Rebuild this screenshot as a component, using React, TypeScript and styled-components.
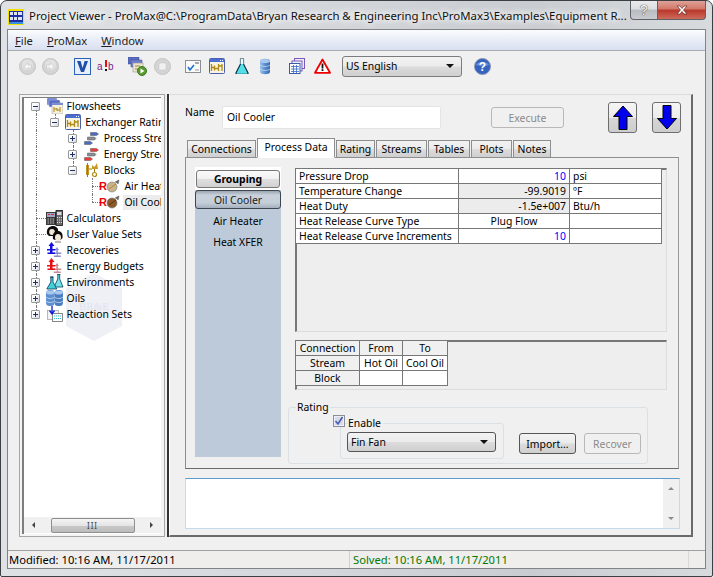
import React from "react";
import styled, { createGlobalStyle } from "styled-components";

const Global = createGlobalStyle`
  html, body { margin: 0; padding: 0; background: #fff; }
  body { font-family: "Noto Sans", "Open Sans", sans-serif; font-size: 10.4px; color: #000; }
  * { box-sizing: border-box; }
`;

const UI = `"Noto Sans", "Open Sans", sans-serif`;
const FS = "10.4px";

const Win = styled.div`
  width: 713px; height: 577px; display: flex; flex-direction: column; position: relative; overflow: hidden;
  border: 1px solid #3c3f43; border-radius: 7px 7px 2px 2px;
  background: linear-gradient(90deg, #dfe2e5 0%, #d5d8dc 40%, #c9cdd1 75%, #d8dbde 100%);
  padding: 0 6px 7px 6px;
`;
const TitleBar = styled.div`
  height: 28px; flex: none; display: flex; align-items: flex-start; position: relative;
`;
const TitleIcon = styled.svg`width: 16px; height: 16px; margin: 8px 5px 0 1px; flex: none;`;
const TitleText = styled.div`
  font-size: 11.38px; line-height: 16px; margin-top: 7px; white-space: nowrap; color: #101010;
  text-shadow: 0 0 6px #fff, 0 0 8px #fff, 0 0 10px #fff; font-family: ${UI};
`;
const Caption = styled.div`position: absolute; right: 0; top: -1px; display: flex; height: 20px;`;
const CapBtn = styled.div<{ $close?: boolean }>`
  width: ${p => (p.$close ? "48px" : "28px")}; height: 20px; display: flex; align-items: center; justify-content: center;
  border: 1px solid #5e6166; border-top: none;
  border-radius: ${p => (p.$close ? "0 0 4px 0" : "0 0 0 4px")};
  ${p => p.$close && "border-left: none;"}
  background: ${p => p.$close
    ? "linear-gradient(180deg,#e0a79c 0%,#d27a6c 45%,#b9392c 55%,#cf6a5c 100%)"
    : "linear-gradient(180deg,#e9ebed 0%,#dcdee1 45%,#b9bdc2 55%,#c8cbcf 100%)"};
  color: #fff; font-size: 14px; font-family: "Liberation Sans", sans-serif;
  text-shadow: 0 0 1px #333, 0 0 1px #333;
`;

const Client = styled.div`
  flex: 1; min-height: 0; display: flex; flex-direction: column; background: #f0f0f0;
  border: 1px solid #7f8489;
`;
const MenuBar = styled.div`
  height: 21px; flex: none; display: flex; align-items: center; padding-left: 7px; gap: 14px;
  background: linear-gradient(180deg, #fbfcfe 0%, #eef1f9 35%, #d9e0f0 100%);
  border-bottom: 1px solid #a8abb0; font-size: 11.2px; color: #1e1e1e;
`;
const MenuItem = styled.span`
  & u { text-underline-offset: 1px; }
`;
const Toolbar = styled.div`
  height: 42px; flex: none; display: flex; align-items: center; padding: 0 0 12px 9px;
`;
const ToolIcon = styled.span<{ $gap?: number; $lead?: number }>`
  width: 20px; height: 20px; display: flex; align-items: center; justify-content: center; flex: none;
  margin-right: ${p => p.$gap ?? 4}px;
  margin-left: ${p => p.$lead ?? 0}px;
  & svg { display: block; }
`;
const LangSelect = styled.div`
  width: 120px; height: 21px; border: 1px solid #7c7c7c; border-radius: 3px; display: flex; align-items: center;
  justify-content: space-between; padding: 0 7px 0 3px; font-size: ${FS}; flex: none;
  background: linear-gradient(180deg,#f3f3f3 0%,#ebebeb 48%,#dcdcdc 52%,#cfcfcf 100%);
`;
const Caret = styled.span`
  width: 0; height: 0; border-left: 4px solid transparent; border-right: 4px solid transparent; border-top: 4px solid #111;
`;

const Main = styled.div`
  flex: 1; min-height: 0; display: flex; padding: 1px 12px 13px 12px;
`;
const TreeFrame = styled.div`
  width: 146px; margin-left: -1px; flex: none; display: flex; padding: 2px 3px 2px 2px;
  border: 1px solid #a6a6a6; background: #f4f4f4;
`;
const TreeInner = styled.div`
  flex: 1; min-width: 0; display: flex; flex-direction: column; background: #fff;
  border-left: 2px solid #7e7e7e; border-top: 1px solid #7e7e7e;
  position: relative; overflow: hidden;
`;
const Tree = styled.div`flex: 1; min-height: 0; padding: 0 0 0 3px; position: relative; overflow: hidden;`;
const Row = styled.div`
  height: 16px; display: flex; align-items: center; white-space: nowrap; position: relative; font-size: ${FS}; width: 200px;
`;
const Guide = styled.span<{ $v?: "full" | "top" | "bottom"; $h?: boolean }>`
  width: 18.6px; height: 16px; flex: none; position: relative; display: flex; align-items: center; justify-content: center;
  &::before {
    content: ""; position: absolute; left: 9px; width: 0; border-left: 1px dotted #777;
    display: ${p => (p.$v ? "block" : "none")};
    top: ${p => (p.$v === "bottom" ? "8px" : "0")};
    bottom: ${p => (p.$v === "top" ? "8px" : "0")};
  }
  &::after {
    content: ""; position: absolute; left: 9px; top: 8px; width: 10px; border-top: 1px dotted #777;
    display: ${p => (p.$h ? "block" : "none")};
  }
`;
const Expander = styled.span`
  width: 9px; height: 9px; border: 1px solid #9a9a9a; border-radius: 1px; position: relative; z-index: 1; margin-left: -1px;
  background: linear-gradient(135deg, #fff 30%, #d4d8e0 100%);
  display: flex; align-items: center; justify-content: center;
  color: #1d2f63;
`;
const ExpH = styled.i`position: absolute; left: 1px; right: 1px; top: 3px; height: 1px; background: #1d2f63;`;
const ExpV = styled.i`position: absolute; top: 1px; bottom: 1px; left: 3px; width: 1px; background: #1d2f63;`;
const NodeIcon = styled.span<{ $leaf?: boolean }>`
  width: ${p => (p.$leaf ? "24px" : "18px")}; margin-left: ${p => (p.$leaf ? "-2px" : "0")};
  height: 16px; flex: none; display: flex; align-items: center; justify-content: ${p => (p.$leaf ? "flex-start" : "center")}; position: relative; z-index: 1;
`;
const NodeText = styled.span<{ $sel?: boolean; $leaf?: boolean }>`
  margin-left: ${p => (p.$leaf ? "0" : "2px")}; padding: 0 1px; line-height: 15px; position: relative; z-index: 1;
  background: ${p => (p.$sel ? "#ececec" : "transparent")};
`;
const Watermark = styled.svg`position: absolute; left: 41px; top: 174px; width: 58px; height: 70px;`;
const HScroll = styled.div`
  height: 16px; flex: none; display: flex; align-items: center; background: #f0f0f0; margin-bottom: 1px; padding: 0 8px;
  justify-content: space-between;
`;
const ArrowL = styled.span`width:0;height:0;border-top:3px solid transparent;border-bottom:3px solid transparent;border-right:3px solid #444;`;
const ArrowR = styled.span`width:0;height:0;border-top:3px solid transparent;border-bottom:3px solid transparent;border-left:3px solid #444;`;
const Thumb = styled.span`
  width: 84px; height: 15px; border: 1px solid #8e8f8f; border-radius: 2px; display: flex; align-items: center; justify-content: center;
  background: linear-gradient(180deg,#f4f4f4 0%,#e4e4e4 50%,#c9c9c9 52%,#bcbcbc 100%); font-size: 8px; color: #444; letter-spacing: 1px;
`;
const Splitter = styled.div`
  width: 4px; flex: none; border-right: 2px solid #333;
`;
const Right = styled.div`
  flex: 1; min-width: 0; display: flex; flex-direction: column; padding: 7px 10px 8px 15px;
  border-top: 1px solid #dcdcdc; border-right: 2px solid #6a6a6a; border-bottom: 2px solid #6a6a6a; border-left: 1px solid #fff;
`;
const HeadRow = styled.div`display: flex; align-items: flex-start; height: 34px; flex: none;`;
const NameLabel = styled.span`width: 37px; margin-top: 3px; font-size: ${FS}; line-height: 15px; flex: none;`;
const NameInput = styled.div`
  width: 219px; height: 23px; margin-top: 4px; background: #fff; border: 1px solid #e4e4e4; border-radius: 2px; padding: 0 4px; line-height: 20px; font-size: ${FS}; flex: none;
`;
const GhostBtn = styled.div`
  border: 1px solid #b8b8b8; border-radius: 3px; color: #8a8a8a; display: flex; align-items: center; justify-content: center; font-size: ${FS};
  background: #f0f0f0;
`;
const ExecBtn = styled(GhostBtn)`width: 73px; height: 21px; margin: 5px 0 0 50px;`;
const ArrowBtn = styled.div<{ $gap: number }>`
  width: 29px; height: 31px; border: 1px solid #6e6e6e; border-radius: 3px; margin-left: ${p => p.$gap}px; flex: none;
  background: linear-gradient(180deg,#f5f5f5 0%,#ececec 50%,#d6d6d6 52%,#cdcdcd 100%);
  display: flex; align-items: center; justify-content: center;
`;
const Tabs = styled.div`display: flex; align-items: flex-end; height: 21px; flex: none; padding-left: 2px; position: relative; z-index: 2; gap: 1px;`;
const Tab = styled.div<{ $active?: boolean; $w: number }>`
  width: ${p => p.$w}px; height: ${p => (p.$active ? "20px" : "17px")}; border: 1px solid #8c8e90;
  display: flex; align-items: center; justify-content: center; font-size: ${FS}; padding-bottom: ${p => (p.$active ? "3px" : "0")};
  ${p => p.$active
    ? "background:#fff; border-bottom-color:#fff; margin-bottom:-1px;"
    : "background:linear-gradient(180deg,#f2f2f2 0%,#ebebeb 50%,#dddddd 52%,#cfcfcf 100%); border-bottom:none;"}
`;
const Pane = styled.div`
  width: 494px; height: 312px; flex: none; border: 1px solid #8c8e90; border-right-color: #9a9a9a; border-bottom-color: #6a6a6a; padding: 9px 0 0 9px; display: flex; background: #f0f0f0;
  position: relative;
`;
const Side = styled.div`
  width: 86px; height: 290px; flex: none; background: #bccad9; display: flex; flex-direction: column; align-items: center;
`;
const GroupHead = styled.div`
  width: 100%; height: 23px; background: #fff; padding: 3px 1px 2px 1px; flex: none;
`;
const GroupBtn = styled.div`
  height: 18px; border: 1px solid #777; border-radius: 3px; font-weight: 700; font-size: ${FS};
  display: flex; align-items: center; justify-content: center;
  background: linear-gradient(180deg,#fafafa 0%,#f0f0f0 50%,#dedede 52%,#d2d2d2 100%);
`;
const GroupItem = styled.div<{ $sel?: boolean }>`
  width: 100%; height: ${p => (p.$sel ? "19px" : "21px")}; display: flex; align-items: center; justify-content: center; font-size: ${FS}; flex: none;
  ${p => p.$sel && `
    margin-bottom: 1px; border: 1px solid #3f4750; border-radius: 3px; color: #202020;
    background: linear-gradient(180deg,#9aa6b2 0%,#c9d2dc 25%,#c4ced9 70%,#a4b0bd 100%);
  `}
`;
const Col = styled.div`width: 372px; margin-left: 7px; flex: none;`;
const GridBox = styled.div<{ $h: number; $mt: number }>`
  margin-left: 7px; width: 372px; height: ${p => p.$h}px; margin-top: ${p => p.$mt}px;
  border-top: 2px solid #777; border-left: 2px solid #777; border-right: 1px solid #dcdcdc; border-bottom: 1px solid #dcdcdc;
  background: #eeeeee;
`;
const Table = styled.table`border-collapse: collapse; table-layout: fixed; margin: -2px 0 0 -2px; font-size: ${FS};`;
const Td = styled.td<{ $w?: number; $bg?: string; $c?: string; $a?: string }>`
  border: 1px solid #777; height: 15px; padding: 0 3px; line-height: 13px; white-space: nowrap; overflow: hidden;
  ${p => p.$w && `width: ${p.$w}px;`}
  background: ${p => p.$bg ?? "#fff"};
  color: ${p => p.$c ?? "#000"};
  text-align: ${p => p.$a ?? "left"};
`;
const Rating = styled.fieldset`
  margin: 11px 0 0 0; width: 360px; height: 63px; border: 1px solid #dbe0e4; border-radius: 3px; padding: 0;
`;
const Legend = styled.legend`padding: 0 1px; margin-left: 7px; font-size: ${FS}; line-height: 13px;`;
const RatingBody = styled.div`display: flex; align-items: flex-start; padding-left: 51px;`;
const EnableWrap = styled.div`position: relative; flex: none; margin-top: 3px;`;
const Enable = styled.fieldset`
  margin: 0; width: 164px; height: 42px; border: 1px solid #dbe0e4; border-radius: 3px; padding: 2px 6px 0 6px;
`;
const EnableLegend = styled.legend`padding: 0 2px 0 0; margin-left: 1px; font-size: ${FS}; line-height: 13px;`;
const Check = styled.span`
  position: absolute; left: -7px; top: -2px; width: 12px; height: 12px; background: #d5dce6; border: 1px solid #8a8f96; box-shadow: inset 0 0 0 1px #eef; display:flex; align-items:center; justify-content:center; z-index: 1;
`;
const TypeSelect = styled(LangSelect)`width: 149px; height: 20px; border-color: #555;`;
const ImportBtn = styled.div`
  width: 57px; height: 21px; margin: 19px 0 0 15px; border: 1px solid #555; border-radius: 3px; display:flex; align-items:center; justify-content:center; font-size: ${FS}; flex: none;
  background: linear-gradient(180deg,#f3f3f3 0%,#ebebeb 48%,#dcdcdc 52%,#cfcfcf 100%);
`;
const RecoverBtn = styled(GhostBtn)`width: 57px; height: 21px; margin: 19px 0 0 8px; flex: none;`;
const Notes = styled.div`
  width: 495px; height: 51px; margin-top: 9px; flex: none; background: #fff;
  border: 1px solid #c5dbec; border-top-color: #5a9ccc; display: flex; justify-content: flex-end;
`;
const NotesBar = styled.div`
  width: 16px; background: #f0f0f0; display: flex; flex-direction: column; justify-content: space-between; align-items: center; padding: 8px 0;
`;
const ArrowU = styled.span`width:0;height:0;border-left:3px solid transparent;border-right:3px solid transparent;border-bottom:3px solid #8a8a8a;`;
const ArrowD = styled.span`width:0;height:0;border-left:3px solid transparent;border-right:3px solid transparent;border-top:3px solid #8a8a8a;`;
const Status = styled.div`
  height: 18px; flex: none; display: flex; background: #f0eded; border-top: 1px solid #a0a0a0; font-size: 11.2px; line-height: 17px;
`;
const StatusCell = styled.div<{ $w?: number; $green?: boolean }>`
  ${p => (p.$w ? `width:${p.$w}px;flex:none;` : "flex:1;")}
  padding-left: ${p => (p.$green ? "3px" : "1px")};
  color: ${p => (p.$green ? "#007a00" : "#000")};
  border-right: 1px solid ${p => (p.$green ? "#d8d8d8" : "#cfcfcf")};
  white-space: nowrap;
`;
const Grip = styled.div`width: 16px; flex: none;`;

/* ---------- drawings ---------- */
const Gray = ({ dir }: { dir: "l" | "r" }) => (
  <svg width="17" height="17" viewBox="0 0 17 17">
    <circle cx="8.5" cy="8.5" r="8" fill="#d4d4d4" stroke="#c4c4c4" />
    <circle cx="8.5" cy="7" r="5.5" fill="#e2e2e2" />
    <path d={dir === "l" ? "M9 4.5 5 8.5l4 4v-2.5h3.5V7H9z" : "M8 4.5l4 4-4 4V10H4.5V7H8z"} fill="#f4f4f4" stroke="#bcbcbc" strokeWidth=".5" />
  </svg>
);
const Stop = () => (
  <svg width="17" height="17" viewBox="0 0 17 17">
    <circle cx="8.5" cy="8.5" r="8" fill="#d4d4d4" stroke="#c4c4c4" />
    <rect x="5" y="5" width="7" height="7" rx="1" fill="#f0f0f0" stroke="#c4c4c4" strokeWidth=".5" />
  </svg>
);
const VIcon = () => (
  <svg width="17" height="17" viewBox="0 0 17 17">
    <rect x=".5" y=".5" width="16" height="16" fill="#e8eefb" stroke="#2b62b8" />
    <path d="M3 3h3.6l2 7 2-7H14l-4 11H7z" fill="#1f4fa8" />
  </svg>
);
const AbIcon = () => (
  <svg width="18" height="15" viewBox="0 0 18 15">
    <text x="0" y="11" fontFamily="Liberation Sans" fontSize="10" fill="#7a1a8a">a</text>
    <rect x="8" y="1" width="2" height="7" fill="#e01010" /><rect x="8" y="10" width="2" height="2" fill="#111" />
    <text x="11" y="11" fontFamily="Liberation Sans" fontSize="10" fill="#7a1a8a">b</text>
  </svg>
);
const FlowPlay = () => (
  <svg width="20" height="19" viewBox="0 0 20 19">
    <rect x="0" y="0" width="11" height="7" fill="#5a6cc0" stroke="#3c4a90" strokeWidth=".5" />
    <rect x="3" y="3" width="11" height="7" fill="#7080cc" stroke="#3c4a90" strokeWidth=".5" />
    <rect x="5" y="6" width="10" height="9" fill="#e9e5d0" stroke="#888" strokeWidth=".5" />
    <path d="M7 9h5M7 12h5" stroke="#a08a30" />
    <circle cx="14" cy="14" r="4.5" fill="#5a9a30" stroke="#3d7a1e" />
    <path d="M12.5 11.5l4 2.5-4 2.5z" fill="#fff" />
  </svg>
);
const CheckWin = () => (
  <svg width="16" height="13" viewBox="0 0 16 13">
    <rect x=".5" y=".5" width="15" height="12" fill="#fafafa" stroke="#8a8f96" />
    <path d="M10 3h4" stroke="#555" />
    <path d="M3 7l2 3 4-5" stroke="#1a70d0" strokeWidth="1.6" fill="none" />
    <path d="M10 10h4" stroke="#999" />
  </svg>
);
const DiagramWin = ({ s = 16 }: { s?: number }) => (
  <svg width={s} height={s} viewBox="0 0 16 16">
    <rect x=".5" y=".5" width="15" height="15" rx="1" fill="#f8f4e4" stroke="#4a5fb0" />
    <rect x="1" y="1" width="14" height="3" fill="#4a6fd0" />
    <path d="M11 2.5h1M13 2.5h1" stroke="#fff" />
    <path d="M2.500 6v7M2.500 9.500h3M5.500 7.500v5M5.500 10.500h4M9.500 6v7M9.500 8h4M13 6v7" fill="none" stroke="#b08a10" strokeWidth="1.300" />
  </svg>
);
const Flask = ({ s = 14 }: { s?: number }) => (
  <svg width={s} height={s * 1.2} viewBox="0 0 14 17">
    <path d="M5 1h4M5.5 1v5L1 15c-.3.7.2 1.5 1 1.5h10c.8 0 1.3-.8 1-1.5L8.5 6V1" fill="#52e0e6" stroke="#0a2a44" strokeWidth="1.2" />
    <path d="M5.5 1h3v5h-3z" fill="#e8fbfc" />
  </svg>
);
const Cyl = ({ w = 12, h = 17 }: { w?: number; h?: number }) => (
  <svg width={w} height={h} viewBox="0 0 12 17">
    <defs><linearGradient id="cy" x1="0" x2="1" y1="0" y2="0"><stop offset="0" stopColor="#9cc0ee" /><stop offset=".5" stopColor="#5b8fd0" /><stop offset="1" stopColor="#3968ac" /></linearGradient></defs>
    <path d="M1 3c0-3 10-3 10 0v11c0 3-10 3-10 0z" fill="url(#cy)" />
    <path d="M1 7c2 2 8 2 10 0M1 11c2 2 8 2 10 0" stroke="#cfe0f6" fill="none" strokeWidth=".7" />
    <ellipse cx="6" cy="3" rx="5" ry="2" fill="#a9c8ef" />
  </svg>
);
const Stack = () => (
  <svg width="16" height="16" viewBox="0 0 16 16">
    <rect x="5.5" y=".5" width="10" height="10" fill="#f0ecfa" stroke="#7a5ab8" />
    <rect x="3" y="3" width="10" height="10" fill="#eef0fa" stroke="#7a5ab8" />
    <rect x=".5" y="5.5" width="10.5" height="10" fill="#fff" stroke="#3a5ab0" />
    <path d="M2 8.5h8M2 11h8M2 13.5h8M4.5 7v8M7.5 7v8" stroke="#3a6ac0" strokeWidth=".8" />
  </svg>
);
const Warn = () => (
  <svg width="17" height="16" viewBox="0 0 17 16">
    <path d="M8.5 1.5 16 14.8H1z" fill="#fff" stroke="#ee0000" strokeWidth="1.8" strokeLinejoin="round" />
    <rect x="7.6" y="5.5" width="1.8" height="5" fill="#111" /><rect x="7.6" y="11.2" width="1.8" height="1.8" fill="#111" />
  </svg>
);
const Help = () => (
  <svg width="17" height="17" viewBox="0 0 17 17">
    <circle cx="8.5" cy="8.5" r="8" fill="#3463c2" stroke="#8a95ad" />
    <path d="M2 7c1-4 12-4 13 0-4 1.5-9 1.5-13 0z" fill="#7f9fe2" opacity=".7" />
    <text x="8.5" y="12.8" textAnchor="middle" fontFamily="Liberation Sans" fontWeight="700" fontSize="12" fill="#fff">?</text>
  </svg>
);
const BigArrow = ({ down }: { down?: boolean }) => (
  <svg width="20" height="25" viewBox="0 0 20 25">
    <path d={down ? "M6 0.5h8v13h5.5L10 24 .5 13.5H6z" : "M6 24.5h8v-13h5.5L10 1 .5 11.5H6z"} fill="#0000ee" stroke="#000" />
  </svg>
);
const CloseX = () => (
  <svg width="16" height="10" viewBox="0 0 16 10">
    <path d="M3 1h3l2 2.500L10 1h3L9.500 5 13 9h-3L8 6.500 6 9H3l3.500-4z" fill="#fff" stroke="#6a2a22" strokeWidth=".7" />
  </svg>
);
const Logo = () => (
  <TitleIcon viewBox="0 0 16 16">
    <rect width="16" height="16" fill="#f4e000" />
    <rect x="1" y="2" width="14" height="11" fill="#1a2fa0" />
    <path d="M2 3h3v3H2zM6 3h3v3H6zM10 3h4v3h-4zM2 8h3v3H2zM6 8h3v3H6zM10 8h4v3h-4z" fill="#f5f5ff" opacity=".9" />
    <rect x="1" y="13" width="14" height="2" fill="#3a90e0" />
  </TitleIcon>
);

const Flowsheets = () => (
  <svg width="16" height="16" viewBox="0 0 16 16">
    <rect x="0" y="0" width="10" height="7" rx="1" fill="#6a7ccc" stroke="#b8c4e4" strokeWidth=".5" />
    <rect x="2" y="2" width="11" height="7" rx="1" fill="#5568c4" stroke="#c8d0ea" strokeWidth=".5" />
    <rect x="5" y="5" width="11" height="11" fill="#f6f1df" stroke="#a8a8a8" strokeWidth=".6" />
    <rect x="5" y="5" width="11" height="2" fill="#7a8cd4" />
    <path d="M7 9v5M7 11h3M10 10v3M10 12h3M13 9v5" fill="none" stroke="#b08a10" />
  </svg>
);
const Arrows = ({ c }: { c: string }) => (
  <svg width="15" height="15" viewBox="0 0 15 15">
    <path d="M6.500 1.500h6l2 1.500-2 1.500h-6z" fill={c} stroke="#555" strokeWidth=".5" />
    <path d="M3.500 6h7l1.500 1.500L10.500 9h-7z" fill="#8a8f96" stroke="#555" strokeWidth=".5" />
    <path d="M.5 10.500h6l2 1.500-2 1.500h-6z" fill={c} stroke="#555" strokeWidth=".5" />
  </svg>
);
const Blocks = () => (
  <svg width="14" height="16" viewBox="0 0 14 16">
    <rect x="1" y="3" width="3" height="10" fill="#c09420" />
    <path d="M2.500 1v14M4 7h3" stroke="#a07a10" />
    <path d="M7 3l2.500 2L12 1l1 6H7z" fill="#c89a20" />
    <path d="M9.500 7v3" stroke="#a07a10" />
    <circle cx="9.500" cy="12.500" r="2" fill="#fff" stroke="#b08a10" strokeWidth="1.200" />
  </svg>
);
const Ball = ({ dark }: { dark?: boolean }) => (
  <svg width="21" height="14" viewBox="0 0 21 14">
    <text x="0" y="11" fontFamily="Liberation Sans" fontWeight="700" fontSize="11" fill="#f00000">R</text>
    <circle cx="13" cy="8" r="5" fill={dark ? "#8a5a28" : "#c9b48a"} stroke="#777" strokeWidth=".6" />
    <path d="M10 10l7-5" stroke={dark ? "#5a3a18" : "#b08840"} />
    <path d="M16 3l4-2-1 4" fill="#666" stroke="#666" strokeWidth=".7" />
  </svg>
);
const Calc = () => (
  <svg width="17" height="16" viewBox="0 0 17 16">
    <rect x="0" y="2" width="10" height="13" fill="#3a3a3a" />
    <rect x="1" y="3" width="8" height="4" fill="#a0a4c8" />
    <path d="M2 4.500h2M5 4.500h3" stroke="#d03030" />
    <path d="M1.500 9h7M1.500 11h7M1.500 13h7" stroke="#c0c0c0" strokeDasharray="1.500 1" />
    <rect x="10" y="0.500" width="6.500" height="15" fill="#6a6a6a" stroke="#111" strokeWidth=".8" />
    <rect x="11" y="2" width="4.500" height="3" fill="#d8d8d8" />
    <path d="M11 7.500h5M11 10h5M11 12.500h5" stroke="#e4e4e4" strokeDasharray="1 1" />
  </svg>
);
const Faces = () => (
  <svg width="17" height="17" viewBox="0 0 17 17">
    <path d="M1 8C0 2 4 0 7 0s6 2 5 7l-3 3H3z" fill="#0c0c0c" />
    <ellipse cx="6" cy="6" rx="2.800" ry="3" fill="#f2e6d8" />
    <path d="M7 13c-1-6 2-8 5-8s5 2 4.500 7l-2 2H9z" fill="#0c0c0c" />
    <ellipse cx="12" cy="11.500" rx="3" ry="3.500" fill="#f2e6d8" />
    <path d="M9 16h6" stroke="#777" />
  </svg>
);
const Balance = ({ c, e }: { c: string; e: string }) => (
  <svg width="17" height="16" viewBox="0 0 17 16">
    <path d="M11 5l2 3h-1.200v2.500h3.500v1.500h-3.500v1.500h3v1.500h-7v-1.500h3V12H6.500v-1.500h3.800V8H9z" fill={e} />
    <path d="M5.500 0l3 4H6.500v3h3v1.500h-3v2h2.500V12H1.500v-1.500H4v-2H1V7h3V4H2.500z" fill={c} />
  </svg>
);
const Flasks = () => (
  <svg width="18" height="16" viewBox="0 0 18 16">
    <path d="M11 0h3.500M11.800 0v5L8 13h9L13.700 5V0z" fill="#70e4ea" stroke="#0a3a54" strokeWidth=".8" />
    <path d="M4 3h3.500M4.800 3v5L.8 15h10L7 8V3z" fill="#3fd0dc" stroke="#0a3a54" strokeWidth=".8" />
  </svg>
);
const Oils = () => (
  <svg width="17" height="16" viewBox="0 0 17 16">
    <g><rect x="0" y="0" width="8.500" height="16" rx="3.500" fill="#5b8fd0" /><ellipse cx="4.250" cy="2.500" rx="4" ry="2" fill="#a9c8ef" /><path d="M0 7c2 2 6.500 2 8.500 0M0 11c2 2 6.500 2 8.500 0" stroke="#cfe0f6" fill="none" strokeWidth=".8" /></g>
    <g><rect x="8.500" y="0" width="8.500" height="16" rx="3.500" fill="#4a7cc0" /><ellipse cx="12.750" cy="2.500" rx="4" ry="2" fill="#a9c8ef" /><path d="M8.500 7c2 2 6.500 2 8.500 0M8.500 11c2 2 6.500 2 8.500 0" stroke="#cfe0f6" fill="none" strokeWidth=".8" /></g>
  </svg>
);
const Reaction = () => (
  <svg width="16" height="16" viewBox="0 0 16 16">
    <rect x="0.500" y="4.500" width="11" height="9" fill="#f4f4f4" stroke="#a0a0a0" strokeWidth=".7" />
    <rect x="5.500" y="7.500" width="10" height="8" fill="#fff" stroke="#555" strokeWidth=".7" />
    <path d="M5 0v7M2.500 4.500 5 8l2.500-3.500" stroke="#0a18e0" fill="none" strokeWidth="1.300" />
    <path d="M7 10h7M7 12.500h7" stroke="#30c0d0" strokeDasharray="1 1" />
  </svg>
);

type Cfg = { g: { v?: "full" | "top" | "bottom"; h?: boolean; exp?: "+" | "-" }[]; icon: React.ReactNode; text: string; sel?: boolean; leaf?: boolean };
const F = { v: "full" as const };
const N = {};
const rows: Cfg[] = [
  { g: [{ v: "bottom", exp: "-" }], icon: <Flowsheets />, text: "Flowsheets" },
  { g: [F, { v: "top", exp: "-" }], icon: <DiagramWin />, text: "Exchanger Rating" },
  { g: [F, N, { v: "full", exp: "+" }], icon: <Arrows c="#4a6ac0" />, text: "Process Streams" },
  { g: [F, N, { v: "full", exp: "+" }], icon: <Arrows c="#e83a3a" />, text: "Energy Streams" },
  { g: [F, N, { v: "top", exp: "-" }], icon: <Blocks />, text: "Blocks" },
  { g: [F, N, N, { v: "full", h: true }], icon: <Ball />, text: "Air Heater", leaf: true },
  { g: [F, N, N, { v: "top", h: true }], icon: <Ball dark />, text: "Oil Cooler", sel: true, leaf: true },
  { g: [{ v: "full", h: true }], icon: <Calc />, text: "Calculators" },
  { g: [{ v: "full", h: true }], icon: <Faces />, text: "User Value Sets" },
  { g: [{ v: "full", exp: "+" }], icon: <Balance c="#1010e0" e="#8a8ec8" />, text: "Recoveries" },
  { g: [{ v: "full", exp: "+" }], icon: <Balance c="#e81010" e="#c88a8e" />, text: "Energy Budgets" },
  { g: [{ v: "full", exp: "+" }], icon: <Flasks />, text: "Environments" },
  { g: [{ v: "full", exp: "+" }], icon: <Oils />, text: "Oils" },
  { g: [{ v: "top", exp: "+" }], icon: <Reaction />, text: "Reaction Sets" },
];

const TreeRow = ({ c }: { c: Cfg }) => (
  <Row>
    {c.g.map((g, i) => (
      <Guide key={i} $v={g.v} $h={g.h}>
        {g.exp && (
          <Expander>
            <ExpH />
            {g.exp === "+" && <ExpV />}
          </Expander>
        )}
      </Guide>
    ))}
    <NodeIcon $leaf={c.leaf}>{c.icon}</NodeIcon>
    <NodeText $sel={c.sel} $leaf={c.leaf}>{c.text}</NodeText>
  </Row>
);

export default function App() {
  return (
    <>
      <Global />
      <Win>
        <TitleBar>
          <Logo />
          <TitleText>Project Viewer - ProMax@C:\ProgramData\Bryan Research &amp; Engineering Inc\ProMax3\Examples\Equipment R...</TitleText>
          <Caption>
            <CapBtn>?</CapBtn>
            <CapBtn $close><CloseX /></CapBtn>
          </Caption>
        </TitleBar>
        <Client>
          <MenuBar>
            <MenuItem><u>F</u>ile</MenuItem>
            <MenuItem><u>P</u>roMax</MenuItem>
            <MenuItem><u>W</u>indow</MenuItem>
          </MenuBar>
          <Toolbar>
            <ToolIcon $gap={3}><Gray dir="l" /></ToolIcon>
            <ToolIcon $gap={12}><Gray dir="r" /></ToolIcon>
            <ToolIcon $gap={4}><VIcon /></ToolIcon>
            <ToolIcon $gap={12}><AbIcon /></ToolIcon>
            <ToolIcon $gap={4}><FlowPlay /></ToolIcon>
            <ToolIcon $gap={11}><Stop /></ToolIcon>
            <ToolIcon $gap={4}><CheckWin /></ToolIcon>
            <ToolIcon $gap={5}><DiagramWin /></ToolIcon>
            <ToolIcon $gap={3}><Flask /></ToolIcon>
            <ToolIcon $gap={12}><Cyl /></ToolIcon>
            <ToolIcon $gap={5}><Stack /></ToolIcon>
            <ToolIcon $gap={10}><Warn /></ToolIcon>
            <LangSelect>US English<Caret /></LangSelect>
            <ToolIcon $lead={10}><Help /></ToolIcon>
          </Toolbar>
          <Main>
            <TreeFrame>
              <TreeInner>
                <Tree>
                  <Watermark viewBox="0 0 58 70">
                    <path d="M29 1 57 16v38L29 69 1 54V16z" fill="#eef0f6" />
                    <text x="29" y="38" textAnchor="middle" fontFamily="Liberation Serif" fontSize="11" fill="#dfe3ee">BR&amp;E</text>
                  </Watermark>
                  {rows.map(r => <TreeRow key={r.text} c={r} />)}
                </Tree>
                <HScroll><ArrowL /><Thumb>III</Thumb><ArrowR /></HScroll>
              </TreeInner>
            </TreeFrame>
            <Splitter />
            <Right>
              <HeadRow>
                <NameLabel>Name</NameLabel>
                <NameInput>Oil Cooler</NameInput>
                <ExecBtn>Execute</ExecBtn>
                <ArrowBtn $gap={44}><BigArrow /></ArrowBtn>
                <ArrowBtn $gap={15}><BigArrow down /></ArrowBtn>
              </HeadRow>
              <Tabs>
                <Tab $w={69}>Connections</Tab>
                <Tab $w={78} $active>Process Data</Tab>
                <Tab $w={39}>Rating</Tab>
                <Tab $w={51}>Streams</Tab>
                <Tab $w={42}>Tables</Tab>
                <Tab $w={41}>Plots</Tab>
                <Tab $w={38}>Notes</Tab>
              </Tabs>
              <Pane>
                <Side>
                  <GroupHead><GroupBtn>Grouping</GroupBtn></GroupHead>
                  <GroupItem $sel>Oil Cooler</GroupItem>
                  <GroupItem>Air Heater</GroupItem>
                  <GroupItem>Heat XFER</GroupItem>
                </Side>
                <Col>
                  <GridBox $h={164} $mt={1}>
                    <Table>
                      <tbody>
                        <tr><Td $w={163}>Pressure Drop</Td><Td $w={111} $a="right" $c="#0000ff">10</Td><Td $w={92}>psi</Td></tr>
                        <tr><Td>Temperature Change</Td><Td $a="right" $bg="#ececec">-99.9019</Td><Td>ºF</Td></tr>
                        <tr><Td>Heat Duty</Td><Td $a="right" $bg="#ececec">-1.5e+007</Td><Td>Btu/h</Td></tr>
                        <tr><Td>Heat Release Curve Type</Td><Td $a="center">Plug Flow</Td><Td></Td></tr>
                        <tr><Td>Heat Release Curve Increments</Td><Td $a="right" $c="#0000ff">10</Td><Td></Td></tr>
                      </tbody>
                    </Table>
                  </GridBox>
                  <GridBox $h={50} $mt={8}>
                    <Table>
                      <tbody>
                        <tr><Td $w={64} $a="center" $bg="#f0f0f0">Connection</Td><Td $w={43} $a="center" $bg="#f0f0f0">From</Td><Td $w={45} $a="center" $bg="#f0f0f0">To</Td></tr>
                        <tr><Td $a="center" $bg="#f0f0f0">Stream</Td><Td $a="center">Hot Oil</Td><Td $a="center">Cool Oil</Td></tr>
                        <tr><Td $a="center" $bg="#f0f0f0">Block</Td><Td></Td><Td></Td></tr>
                      </tbody>
                    </Table>
                  </GridBox>
                  <Rating>
                    <Legend>Rating</Legend>
                    <RatingBody>
                      <EnableWrap>
                        <Check>
                          <svg width="10" height="10" viewBox="0 0 10 10"><path d="M1.500 5l2.500 3 4.500-7" stroke="#4a5ab0" strokeWidth="1.600" fill="none" /></svg>
                        </Check>
                        <Enable>
                          <EnableLegend>Enable</EnableLegend>
                          <TypeSelect>Fin Fan<Caret /></TypeSelect>
                        </Enable>
                      </EnableWrap>
                      <ImportBtn>Import...</ImportBtn>
                      <RecoverBtn>Recover</RecoverBtn>
                    </RatingBody>
                  </Rating>
                </Col>
              </Pane>
              <Notes>
                <NotesBar><ArrowU /><ArrowD /></NotesBar>
              </Notes>
            </Right>
          </Main>
          <Status>
            <StatusCell $w={342}>Modified: 10:16 AM, 11/17/2011</StatusCell>
            <StatusCell $green>Solved: 10:16 AM, 11/17/2011</StatusCell>
            <Grip />
          </Status>
        </Client>
      </Win>
    </>
  );
}
